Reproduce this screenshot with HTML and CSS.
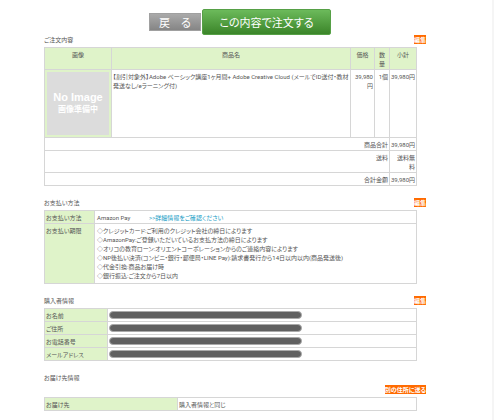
FILE: index.html
```html
<!DOCTYPE html>
<html lang="ja">
<head>
<meta charset="utf-8">
<title>ご注文内容の確認</title>
<link rel="stylesheet" href="styles.css">
</head>
<body>
<main class="page">
  <div class="actions">
    <button type="button" class="btn btn-back">戻　る</button>
    <button type="button" class="btn btn-order">この内容で注文する</button>
  </div>

  <section class="block">
    <header class="bar"><h2>ご注文内容</h2><a class="edit" href="#">編集</a></header>
    <table class="grid items">
      <colgroup><col class="c-img"><col><col class="c-price"><col class="c-qty"><col class="c-sum"></colgroup>
      <thead>
        <tr><th>画像</th><th>商品名</th><th>価格</th><th>数<br>量</th><th>小計</th></tr>
      </thead>
      <tbody>
        <tr>
          <td class="thumb"><div class="noimage"><b>No Image</b><span>画像準備中</span></div></td>
          <td>【割引対象外】Adobe ベーシック講座1ヶ月間+ Adobe Creative Cloud (メールでID送付・教材発送なし/eラーニング付)</td>
          <td class="num">39,980<br>円</td>
          <td class="num">1個</td>
          <td class="num">39,980円</td>
        </tr>
        <tr><td class="num" colspan="4">商品合計</td><td class="num">39,980円</td></tr>
        <tr><td class="num" colspan="4">送料</td><td class="num">送料無<br>料</td></tr>
        <tr><td class="num" colspan="4">合計金額</td><td class="num">39,980円</td></tr>
      </tbody>
    </table>
  </section>

  <section class="block">
    <header class="bar"><h2>お支払い方法</h2><a class="edit" href="#">編集</a></header>
    <table class="grid payment">
      <tr><th>お支払い方法</th><td><span class="method">Amazon Pay</span><a class="more" href="#">&gt;&gt;詳細情報をご確認ください</a></td></tr>
      <tr><th>お支払い期限</th><td>
        <ul class="terms">
          <li>◇クレジットカード:ご利用のクレジット会社の締日によります</li>
          <li>◇AmazonPay:ご登録いただいているお支払方法の締日によります</li>
          <li>◇オリコの教育ローン:オリエントコーポレーションからのご連絡内容によります</li>
          <li>◇NP後払い決済(コンビニ・銀行・郵便局・LINE Pay):請求書発行から14日以内以内(商品発送後)</li>
          <li>◇代金引換:商品お届け時</li>
          <li>◇銀行振込:ご注文から7日以内</li>
        </ul>
      </td></tr>
    </table>
  </section>

  <section class="block">
    <header class="bar"><h2>購入者情報</h2><a class="edit" href="#">編集</a></header>
    <table class="grid buyer">
      <tr><th>お名前</th><td><div class="mask"></div></td></tr>
      <tr><th>ご住所</th><td><div class="mask"></div></td></tr>
      <tr><th>お電話番号</th><td><div class="mask"></div></td></tr>
      <tr><th>メールアドレス</th><td><div class="mask"></div></td></tr>
    </table>
  </section>

  <section class="block">
    <header class="bar"><h2>お届け先情報</h2></header>
    <div class="other"><a class="edit" href="#">別の住所に送る</a></div>
    <table class="grid shipping">
      <tr><th>お届け先</th><td>購入者情報と同じ</td></tr>
    </table>
  </section>
</main>
</body>
</html>
```
FILE: styles.css
```css
* { box-sizing: border-box; }
body {
  margin: 0;
  min-height: 100vh;
  background: #fff;
  border-right: 2px solid #f5f5f5;
  color: #555;
  font: 6px/9px Roboto, "Noto Sans CJK JP", sans-serif;
  font-feature-settings: "palt";
}
.page { padding: 9px 66px 0 44px; }
.actions {
  display: flex;
  justify-content: center;
  align-items: center;
  gap: 1px;
  padding-left: 10px;
}
.btn {
  border: 1px solid #a0a0a0;
  padding: 0;
  color: #fff;
  font: 11px/14px "Noto Sans CJK JP", sans-serif;
  font-feature-settings: "palt";
}
.btn-back {
  width: 52px;
  height: 18px;
  background: linear-gradient(#aaa, #858585);
}
.btn-order {
  width: 129px;
  height: 26px;
  border-color: #56a046;
  border-radius: 2px;
  background: linear-gradient(#6cba5b, #3b8529);
}
.bar {
  display: flex;
  justify-content: space-between;
  align-items: center;
  height: 9px;
  margin-bottom: 3px;
}
.bar h2 { margin: 0; font-size: 6px; font-weight: 400; }
.block + .block { margin-top: 12px; }
.edit {
  display: inline-block;
  background: #ff6a00;
  color: #fff;
  font-weight: 700;
  text-decoration: none;
}
.grid {
  width: calc(100% - 9px);
  border-collapse: collapse;
  table-layout: fixed;
}
.grid th, .grid td {
  border: 1px solid #d6d6d6;
  padding: 2px 1px 1px;
  vertical-align: top;
  text-align: left;
  font-weight: 400;
}
.grid th { background: #dff3c9; }
.items thead th { text-align: center; }
.grid .num { text-align: right; white-space: nowrap; }
.c-img { width: 18%; }
.c-price { width: 24px; }
.c-qty { width: 15px; }
.c-sum { width: 27px; }
.grid .thumb { padding: 2px; background: #dff3c9; }
.noimage {
  display: flex;
  flex-direction: column;
  align-items: center;
  justify-content: center;
  gap: 1px;
  height: 63px;
  background: #dcdcdc;
  color: #fff;
  font-size: 8px;
  line-height: 12px;
}
.noimage b { font: 700 11px/12px "Liberation Sans", sans-serif; }
.noimage span { font-weight: 700; }
.payment th { width: 50px; }
.grid.payment td { padding-left: 2px; }
.method { display: inline-block; width: 52px; }
.more { color: #149bc4; text-decoration: none; }
.terms { margin: 0; padding: 0 0 2px; list-style: none; }
.buyer th { width: 17%; }
.mask {
  width: 193px;
  height: 8px;
  border: 1px solid #aaa;
  border-radius: 4px;
  background: #606060;
}
.other { display: flex; justify-content: flex-end; margin-bottom: 3px; }
.shipping th { width: 133px; }
```
